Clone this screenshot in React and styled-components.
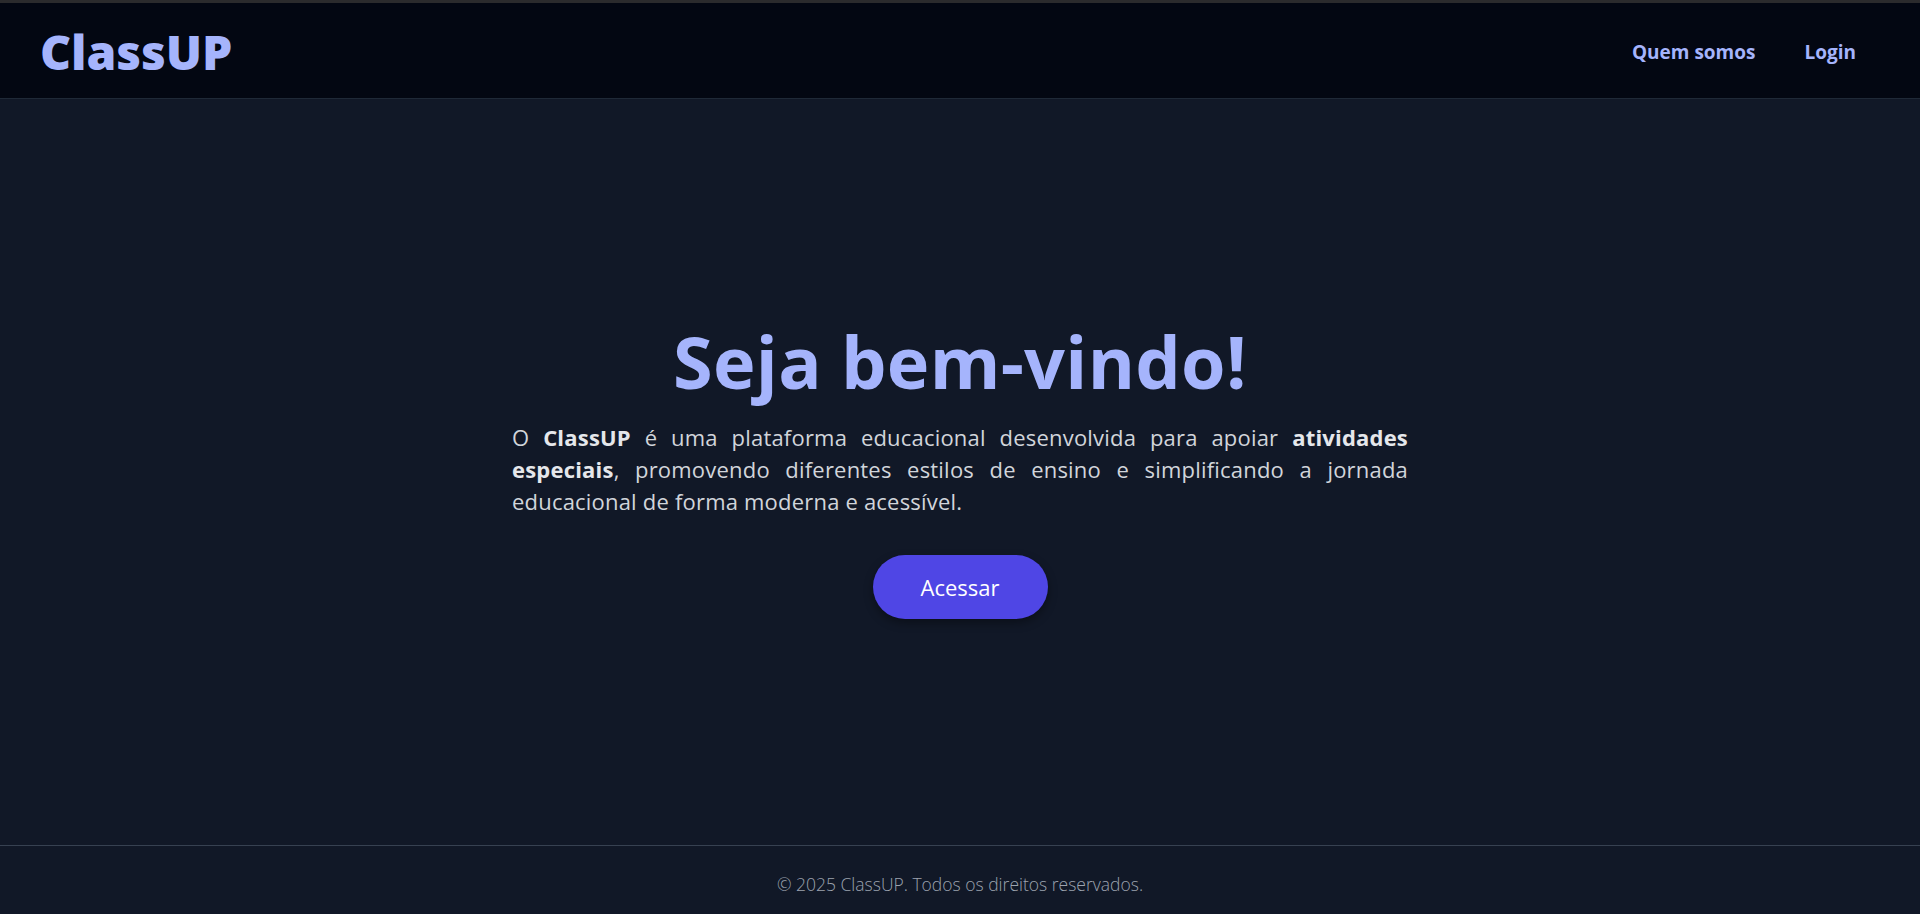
import React from "react";
import styled, { createGlobalStyle } from "styled-components";

const GlobalStyle = createGlobalStyle`
  *, *::before, *::after { box-sizing: border-box; }
  html, body { margin: 0; padding: 0; }
  body {
    background: #ffffff;
    font-family: "Open Sans", "Noto Sans", "Liberation Sans", sans-serif;
  }
`;

const Page = styled.div`
  width: calc(100% - 6px);
  min-height: 100vh;
  display: flex;
  flex-direction: column;
  background: #111827;
  border-top: 3px solid #2b2b2d;
`;

const Header = styled.header`
  height: 96px;
  display: flex;
  align-items: center;
  justify-content: space-between;
  padding: 3px 64px 0 40px;
  background: #030712;
  border-bottom: 1px solid #1f2937;
`;

const Logo = styled.div`
  font-size: 48px;
  font-weight: 800;
  line-height: 1;
  color: #a5b4fc;
  letter-spacing: -0.1px;
`;

const Nav = styled.nav`
  display: flex;
  align-items: center;
  gap: 49px;
`;

const NavLink = styled.a`
  font-size: 19px;
  font-weight: 700;
  line-height: 1;
  color: #a5b4fc;
  text-decoration: none;
  cursor: pointer;
`;

const Main = styled.main`
  flex: 1;
  display: flex;
  flex-direction: column;
  align-items: center;
  justify-content: center;
  padding: 0 24px;
`;

const Title = styled.h1`
  margin: 0 0 24px;
  font-size: 72px;
  font-weight: 700;
  line-height: 1;
  color: #a5b4fc;
  letter-spacing: 0.3px;
`;

const Lead = styled.p`
  margin: 0;
  max-width: 896px;
  width: 100%;
  font-size: 22px;
  line-height: 32px;
  letter-spacing: 0.2px;
  color: #d1d5db;
  text-align: justify;
  strong { color: #e5e7eb; font-weight: 700; }
`;

const CTA = styled.button`
  margin-top: 38px;
  height: 64px;
  padding: 0 48px;
  border: none;
  border-radius: 9999px;
  background: #4f46e5;
  color: #ffffff;
  font-family: inherit;
  font-size: 22px;
  font-weight: 500;
  box-shadow: 0 4px 10px rgba(0, 0, 0, 0.35);
  cursor: pointer;
`;

const Footer = styled.footer`
  height: 69px;
  display: flex;
  align-items: center;
  justify-content: center;
  padding-top: 8px;
  border-top: 1px solid #374151;
  background: #111827;
  color: #9ca3af;
  font-size: 17.5px;
  font-weight: 300;
`;

export default function App() {
  return (
    <>
      <GlobalStyle />
      <Page>
        <Header>
          <Logo>ClassUP</Logo>
          <Nav>
            <NavLink>Quem somos</NavLink>
            <NavLink>Login</NavLink>
          </Nav>
        </Header>
        <Main>
          <Title>Seja bem-vindo!</Title>
          <Lead>
            O <strong>ClassUP</strong> é uma plataforma educacional desenvolvida para apoiar{" "}
            <strong>atividades especiais</strong>, promovendo diferentes estilos de ensino e
            simplificando a jornada educacional de forma moderna e acessível.
          </Lead>
          <CTA>Acessar</CTA>
        </Main>
        <Footer>© 2025 ClassUP. Todos os direitos reservados.</Footer>
      </Page>
    </>
  );
}
